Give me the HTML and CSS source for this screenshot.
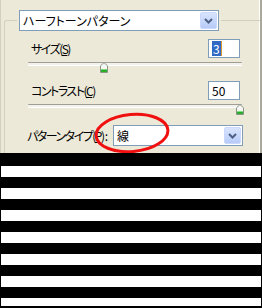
FILE: index.html
```html
<!DOCTYPE html>
<html>
<head>
  <meta charset="UTF-8" />
  <title>ハーフトーンパターン</title>
  <link rel="stylesheet" href="styles.css">
</head>
<body>

  <div class="panel">
    <div class="group">
      <div class="group-head">
        <div class="combo">
          <span class="combo-text">ハーフトーンパターン</span>
          <span class="combo-btn">
            <svg width="9" height="6" viewBox="0 0 9 6"><path d="M1 1 L4.5 4.5 L8 1" fill="none" stroke="#4D6185" stroke-width="2"/></svg>
          </span>
        </div>
      </div>

      <div class="field">
        <span class="label">サイズ(<u>S</u>)</span>
        <div class="num"><span class="sel">3</span></div>
      </div>
      <div class="slider">
        <div class="track"></div>
        <span class="thumb" style="left: 72px">
          <svg width="8" height="11" viewBox="0 0 8 11">
            <path d="M0.5 3.8 L4 0.5 L7.5 3.8 V10.5 H0.5 Z" fill="#F6F6F2" stroke="#8A9487"/>
            <rect x="1" y="7" width="6" height="1" fill="#7EDB7E"/>
            <rect x="1" y="8" width="6" height="2" fill="#2AAE2A"/>
          </svg>
        </span>
      </div>

      <div class="field">
        <span class="label">コントラスト(<u>C</u>)</span>
        <div class="num">50</div>
      </div>
      <div class="slider">
        <div class="track"></div>
        <span class="thumb" style="left: 208px">
          <svg width="8" height="11" viewBox="0 0 8 11">
            <path d="M0.5 3.8 L4 0.5 L7.5 3.8 V10.5 H0.5 Z" fill="#F6F6F2" stroke="#8A9487"/>
            <rect x="1" y="7" width="6" height="1" fill="#7EDB7E"/>
            <rect x="1" y="8" width="6" height="2" fill="#2AAE2A"/>
          </svg>
        </span>
      </div>

      <div class="field field-type">
        <span class="label">パターンタイプ(<u>P</u>) :</span>
        <div class="combo combo-small">
          <span class="combo-text">線</span>
          <span class="combo-btn">
            <svg width="9" height="6" viewBox="0 0 9 6"><path d="M1 1 L4.5 4.5 L8 1" fill="none" stroke="#4D6185" stroke-width="2"/></svg>
          </span>
        </div>
      </div>
    </div>

    <!-- 赤い丸の書き込み -->
    <svg class="mark" width="80" height="46" viewBox="0 0 80 46">
      <ellipse cx="40" cy="23" rx="36" ry="18.5" transform="rotate(-5 40 23)" fill="none" stroke="#F01010" stroke-width="3"/>
    </svg>
  </div>

  <div class="preview">
    <div class="stripe"></div>
    <div class="stripe"></div>
    <div class="stripe"></div>
    <div class="stripe"></div>
    <div class="stripe"></div>
    <div class="stripe"></div>
    <div class="stripe"></div>
  </div>

</body>
</html>
```

FILE: styles.css
```css
body {
  margin: 0;
  width: 262px;
  height: 308px;
  overflow: hidden;
  font-family: "Noto Sans CJK JP", "Noto Sans", sans-serif;
  font-size: 12px;
  color: #000;
  font-feature-settings: "palt";
}

.panel {
  position: relative;
  height: 153px;
  box-sizing: border-box;
  padding-top: 20px;
  background: #ECE9D8;
  border-left: 1px solid #D2CFBF;
  border-right: 2px solid #ACA899;
  box-shadow: inset -1px 0 #fff;
  overflow: hidden;
}

.group {
  margin-left: 3px;
  height: 200px;
  border-top: 1px solid #D0D0BF;
  border-left: 1px solid #D0D0BF;
  border-top-left-radius: 3px;
}

.group-head {
  display: flex;
  width: 200px;
  margin: -11px 0 0 12px;
  padding: 0 2px;
  background: #ECE9D8;
}

.combo {
  display: flex;
  align-items: center;
  flex-shrink: 0;
  width: 200px;
  height: 21px;
  box-sizing: border-box;
  padding: 1px;
  border: 1px solid #7F9DB9;
  background: #fff;
}

.combo-small {
  width: 130px;
}

.combo-text {
  flex: 1;
  padding-left: 2px;
  line-height: 14px;
  white-space: nowrap;
}

.combo-btn {
  display: flex;
  align-items: center;
  justify-content: center;
  width: 17px;
  height: 17px;
  box-sizing: border-box;
  border: 1px solid #C9D8FC;
  border-radius: 2px;
  background: linear-gradient(#D9E4FD, #B7CBF8);
}

.field {
  display: flex;
  justify-content: space-between;
  align-items: center;
  width: 209px;
  height: 19px;
  margin: 8px 0 0 26px;
}

.field-type {
  width: 216px;
  height: 21px;
  margin: 10px 0 0 22px;
}

.label {
  line-height: 14px;
  letter-spacing: -1.5px;
  white-space: nowrap;
}

.num {
  width: 32px;
  height: 19px;
  box-sizing: border-box;
  padding: 1px 0 0 3px;
  border: 1px solid #7F9DB9;
  background: #fff;
  line-height: 15px;
}

.sel {
  display: inline-block;
  padding: 0 1px;
  background: #316AC5;
  color: #fff;
  border-right: 1px solid #D9962E;
}

.slider {
  position: relative;
  width: 214px;
  height: 11px;
  margin: 3px 0 0 23px;
}

.track {
  height: 4px;
  margin-top: 4px;
  box-sizing: border-box;
  border-top: 1px solid #A09E94;
  border-bottom: 1px solid #fff;
  background: #F2F1EC;
  border-radius: 1px;
}

.thumb {
  position: absolute;
  top: 0;
  display: block;
  width: 8px;
  height: 11px;
}

.thumb svg {
  display: block;
}

.mark {
  position: absolute;
  left: 91px;
  top: 110px;
}

.preview {
  height: 155px;
  box-sizing: border-box;
  padding: 13px 1px 0;
  background: #000;
  border-bottom: 2px solid #000;
  overflow: hidden;
}

.stripe {
  height: 11px;
  margin-bottom: 11px;
  background: #fff;
}
```
